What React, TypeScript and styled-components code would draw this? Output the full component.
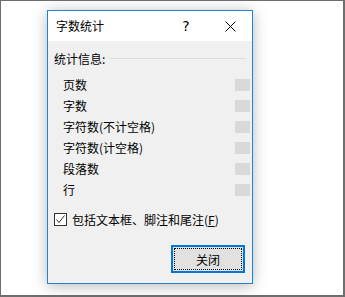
import React from "react";
import styled, { createGlobalStyle } from "styled-components";

const Global = createGlobalStyle`
  html, body { margin: 0; padding: 0; background: #ffffff; }
  body { font-family: "Noto Sans CJK SC", "Noto Sans", sans-serif; }
`;

const Frame = styled.div`
  box-sizing: border-box;
  width: 345px;
  height: 297px;
  background: #ffffff;
  border-style: solid;
  border-color: #6e6e6e;
  border-width: 1px 2px 2px 1px;
  padding: 9px 0 0 46px;
`;

const Dialog = styled.div`
  box-sizing: border-box;
  width: 206px;
  height: 274px;
  border: 1px solid #1a84d8;
  background: #f0f0f0;
  box-shadow: 0 2px 14px rgba(0, 0, 0, 0.28);
  display: flex;
  flex-direction: column;
  font-size: 12px;
  color: #000;
`;

const TitleBar = styled.div`
  height: 30px;
  background: #ffffff;
  display: flex;
  align-items: center;
  padding-left: 8px;
`;

const Title = styled.div`
  flex: 1;
  font-size: 12px;
  line-height: 16px;
`;

const TitleButton = styled.div`
  width: 44px;
  height: 30px;
  display: flex;
  align-items: center;
  justify-content: center;
  font-family: "DejaVu Sans", "Liberation Sans", sans-serif;
  font-size: 14px;
`;

const Body = styled.div`
  flex: 1;
  display: flex;
  flex-direction: column;
  padding: 7px 6px 10px 6px;
`;

const GroupHeader = styled.div`
  display: flex;
  align-items: center;
  height: 20px;
  gap: 5px;
`;

const GroupLine = styled.div`
  flex: 1;
  height: 1px;
  background: #dcdcdc;
`;

const Rows = styled.div`
  display: flex;
  flex-direction: column;
  margin-top: 6px;
  margin-right: -4px;
`;

const Row = styled.div`
  height: 21px;
  display: flex;
  align-items: center;
  justify-content: space-between;
  padding-left: 9px;
`;

const ValueBox = styled.div`
  width: 15px;
  height: 12px;
  background: #d9d9d9;
`;

const CheckRow = styled.label`
  display: flex;
  align-items: center;
  height: 20px;
  margin-top: 9px;
  gap: 5px;
`;

const Box = styled.span`
  box-sizing: border-box;
  width: 13px;
  height: 13px;
  border: 1px solid #333333;
  background: #ffffff;
  display: flex;
  align-items: center;
  justify-content: center;
`;

const Underline = styled.span`
  text-decoration: underline;
`;

const Footer = styled.div`
  display: flex;
  justify-content: flex-end;
  margin-top: auto;
  padding-right: 1px;
`;

const Button = styled.button`
  box-sizing: border-box;
  width: 74px;
  height: 28px;
  border: 2px solid #0078d7;
  background: #e1e1e1;
  outline: 1px dotted #000;
  outline-offset: -4px;
  font-family: "Noto Sans CJK SC", sans-serif;
  font-size: 12px;
  color: #000;
  padding: 0;
`;

const labels = ["页数", "字数", "字符数(不计空格)", "字符数(计空格)", "段落数", "行"];

export default function App() {
  return (
    <>
      <Global />
      <Frame>
        <Dialog>
          <TitleBar>
            <Title>字数统计</Title>
            <TitleButton>?</TitleButton>
            <TitleButton>
              <svg width="11" height="11" viewBox="0 0 11 11">
                <path d="M0.5 0.5 L10.5 10.5 M10.5 0.5 L0.5 10.5" stroke="#000" strokeWidth="1" fill="none" />
              </svg>
            </TitleButton>
          </TitleBar>
          <Body>
            <GroupHeader>
              <span>统计信息:</span>
              <GroupLine />
            </GroupHeader>
            <Rows>
              {labels.map((l) => (
                <Row key={l}>
                  <span>{l}</span>
                  <ValueBox />
                </Row>
              ))}
            </Rows>
            <CheckRow>
              <Box>
                <svg width="11" height="11" viewBox="0 0 11 11">
                  <path d="M1.5 5.5 L4 8.5 L9.5 1.5" stroke="#333" strokeWidth="1" fill="none" />
                </svg>
              </Box>
              <span>
                包括文本框、脚注和尾注(<Underline>F</Underline>)
              </span>
            </CheckRow>
            <Footer>
              <Button>关闭</Button>
            </Footer>
          </Body>
        </Dialog>
      </Frame>
    </>
  );
}
